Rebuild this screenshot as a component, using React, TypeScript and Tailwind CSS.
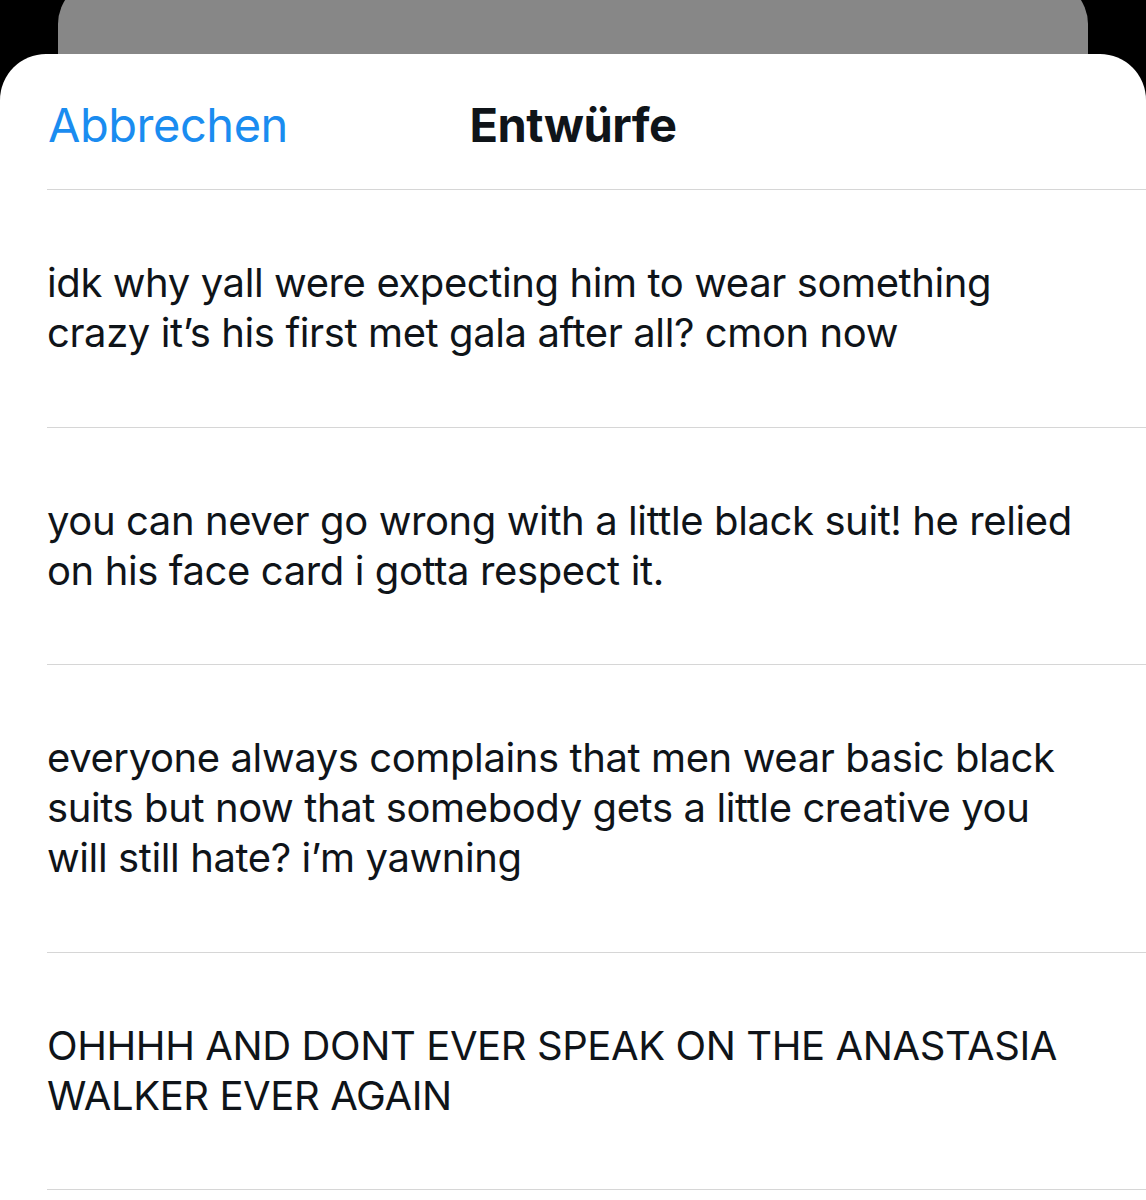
const drafts: string[][] = [
  ["idk why yall were expecting him to wear something", "crazy it\u2019s his first met gala after all? cmon now"],
  ["you can never go wrong with a little black suit! he relied", "on his face card i gotta respect it."],
  [
    "everyone always complains that men wear basic black",
    "suits but now that somebody gets a little creative you",
    "will still hate? i\u2019m yawning",
  ],
  ["OHHHH AND DONT EVER SPEAK ON THE ANASTASIA", "WALKER EVER AGAIN"],
]

export default function App() {
  return (
    <div className="h-[1200px] w-[1146px] overflow-hidden bg-black font-['Inter',sans-serif]">
      {/* card peeking from behind */}
      <div className="mx-[58px] -mt-[20px] h-[75px] rounded-t-[44px] bg-[#878787]" />

      {/* sheet */}
      <div className="-mt-px h-[1200px] rounded-t-[46px] bg-white">
        <div className="relative flex h-[135px] items-center pt-[5px] pl-[48px]">
          <button className="text-[47px] leading-none tracking-[-0.01em] text-[#1a8cf0]">Abbrechen</button>
          <h1 className="absolute left-1/2 -translate-x-1/2 text-[47px] font-bold leading-none tracking-[-0.01em] text-[#0f1419]">
            Entwürfe
          </h1>
        </div>

        <div className="ml-[47px] border-t border-[#d6d6d6]">
          {drafts.map((lines, i) => (
            <div key={i} className="border-b border-[#d6d6d6] pt-[68px] pb-[68.5px] pr-4">
              {lines.map((l, j) => (
                <p key={j} className="whitespace-nowrap text-[40px] leading-[50px] tracking-[-0.01em] text-[#0f1419]">
                  {l}
                </p>
              ))}
            </div>
          ))}
        </div>
      </div>
    </div>
  )
}
